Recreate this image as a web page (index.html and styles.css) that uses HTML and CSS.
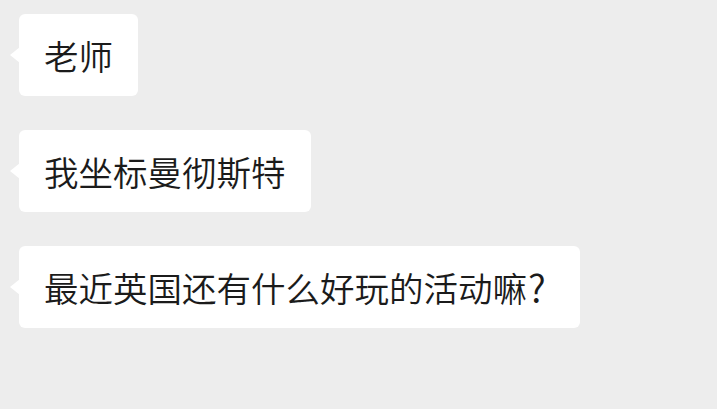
FILE: index.html
```html
<!DOCTYPE html>
<html lang="zh-CN">
<head>
<meta charset="utf-8">
<link rel="stylesheet" href="styles.css">
</head>
<body>
<div class="chat">
  <div class="bubble">老师</div>
  <div class="bubble">我坐标曼彻斯特</div>
  <div class="bubble">最近英国还有什么好玩的活动嘛<span class="q">?</span></div>
</div>
</body>
</html>
```
FILE: styles.css
```css
html, body {
  margin: 0;
  padding: 0;
  background: #ededed;
}
.chat {
  display: flex;
  flex-direction: column;
  align-items: flex-start;
  gap: 34px;
  padding: 14px 0 0 19px;
}
.bubble {
  position: relative;
  background: #ffffff;
  border-radius: 6px;
  padding: 17px 25px 17px 25px;
  line-height: 48px;
  font-size: 34.5px;
  font-weight: 350;
  color: #1b1b1b;
  font-family: "Noto Sans CJK SC", "Noto Sans", sans-serif;
  white-space: nowrap;
}
.q {
  display: inline-block;
  width: 27px;
  padding-left: 1px;
  font-size: 38px;
  line-height: 48px;
  vertical-align: top;
}
.bubble::before {
  content: "";
  position: absolute;
  left: -9px;
  top: 50%;
  margin-top: -8px;
  width: 0;
  height: 0;
  border-top: 8px solid transparent;
  border-bottom: 8px solid transparent;
  border-right: 10px solid #ffffff;
}
```
